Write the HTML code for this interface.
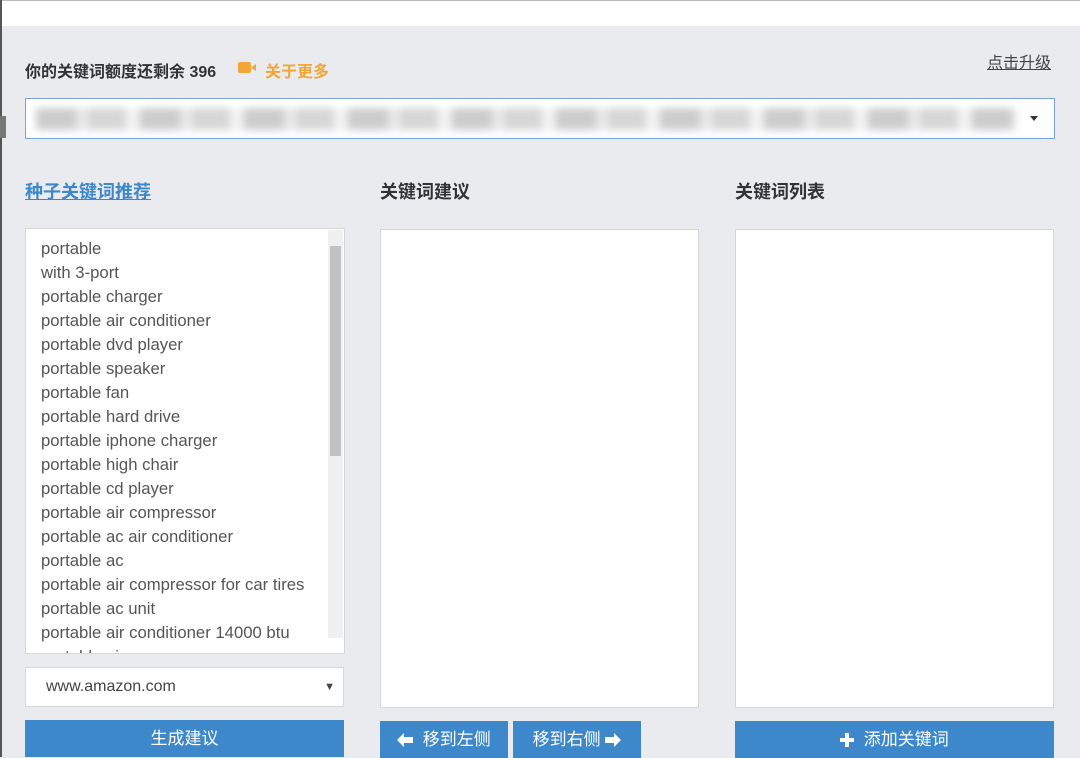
<!DOCTYPE html>
<html><head><meta charset="utf-8"><style>
*{box-sizing:border-box;margin:0;padding:0}
body{width:1080px;height:757px;overflow:hidden;background:#e9ebef;font-family:"Liberation Sans","Noto Sans CJK SC",sans-serif;position:relative}
.top{position:absolute;left:0;top:0;width:1080px;height:26px;background:#fff;border-top:1px solid #bbb}
.lb{position:absolute;left:0;top:0;width:2px;height:757px;background:#555}
.abs{position:absolute}
.h{font-size:18px;font-weight:bold;color:#333}
.box{position:absolute;background:#fff;border:1px solid #d4d6da}
.list div{font-size:16.7px;color:#555;height:24px;line-height:24px;white-space:nowrap}
.btn{position:absolute;background:#3d87cb;color:#fff;font-size:17px;text-align:center;line-height:37px}
.btn svg{vertical-align:-2px}
</style></head><body>
<div class="top"></div><div class="lb"></div>
<div class="abs" style="left:25px;top:58px;font-size:16px;font-weight:bold;color:#333">你的关键词额度还剩余 396</div>
<div class="abs" style="left:238px;top:62px;width:13px;height:11px;background:#f3a536;border-radius:2px"></div>
<div class="abs" style="left:251px;top:64px;width:5px;height:7px;background:#f3a536;clip-path:polygon(0 50%,100% 0,100% 100%)"></div>
<div class="abs" style="left:265px;top:58px;font-size:16px;font-weight:bold;color:#f3a536">关于更多</div>
<div class="abs" style="left:987px;top:49px;font-size:16px;color:#444;text-decoration:underline">点击升级</div>
<div class="abs" style="left:25px;top:98px;width:1030px;height:41px;background:#fff;border:1px solid #7aa3dc;overflow:hidden">
 <div style="position:absolute;left:10px;top:9px;width:980px;height:22px;background:repeating-linear-gradient(90deg,#c4c4c4 0 40px,#e4e4e4 40px 52px,#d0d0d0 52px 90px,#f0f0f0 90px 104px);filter:blur(4px);opacity:.85"></div>
 <div style="position:absolute;right:16px;top:17px;border:4px solid transparent;border-top:5px solid #333"></div>
</div>
<div class="abs" style="left:0;top:116px;width:6px;height:22px;background:#777"></div>
<div class="abs h" style="left:25px;top:178px;color:#3d87cb;text-decoration:underline">种子关键词推荐</div>
<div class="abs h" style="left:380px;top:178px">关键词建议</div>
<div class="abs h" style="left:735px;top:178px">关键词列表</div>
<div class="box list" style="left:25px;top:228px;width:320px;height:426px;padding:8px 0 0 15px;overflow:hidden">
<div>portable</div><div>with 3-port</div><div>portable charger</div><div>portable air conditioner</div><div>portable dvd player</div><div>portable speaker</div><div>portable fan</div><div>portable hard drive</div><div>portable iphone charger</div><div>portable high chair</div><div>portable cd player</div><div>portable air compressor</div><div>portable ac air conditioner</div><div>portable ac</div><div>portable air compressor for car tires</div><div>portable ac unit</div><div>portable air conditioner 14000 btu</div><div>portable air pump</div>
<span style="position:absolute;right:1px;top:1px;width:15px;height:408px;background:#f0f0f0"></span>
<span style="position:absolute;right:3px;top:17px;width:11px;height:210px;background:#c1c1c1"></span>
</div>
<div class="box" style="left:25px;top:667px;width:319px;height:40px;font-size:16px;color:#444;line-height:38px;padding-left:20px">www.amazon.com<span style="position:absolute;right:8px;top:0;font-size:11px">▼</span></div>
<div class="box" style="left:380px;top:229px;width:319px;height:479px"></div>
<div class="box" style="left:735px;top:229px;width:319px;height:479px"></div>
<div class="btn" style="left:25px;top:720px;width:319px">生成建议</div>
<div class="btn" style="left:380px;top:721px;width:128px"><svg width="16" height="14" viewBox="0 0 16 14"><path d="M0 7 7 0v4h9v6H7v4z" fill="#fff"/></svg>&nbsp; 移到左侧</div>
<div class="btn" style="left:513px;top:721px;width:128px">移到右侧 <svg width="16" height="14" viewBox="0 0 16 14"><path d="M16 7 9 0v4H0v6h9v4z" fill="#fff"/></svg></div>
<div class="btn" style="left:735px;top:721px;width:319px"><svg width="14" height="14" viewBox="0 0 14 14"><path d="M5 0h4v5h5v4H9v5H5V9H0V5h5z" fill="#fff"/></svg>&nbsp; 添加关键词</div>
</body></html>
